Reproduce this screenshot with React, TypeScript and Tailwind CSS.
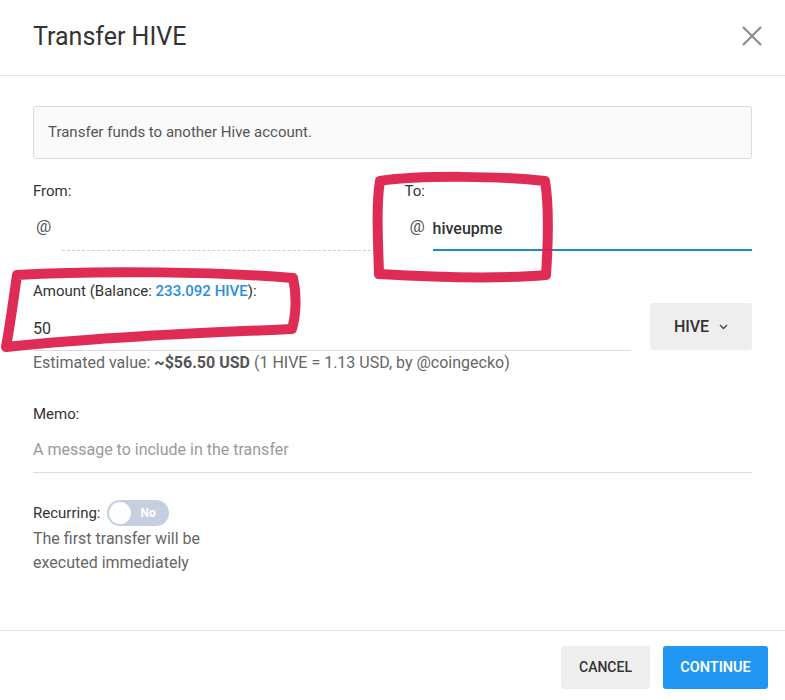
import React from "react";

function Annotations() {
    // hand drawn red marks over the screenshot
    return (
        <svg className="absolute inset-0 pointer-events-none" width="785" height="700" viewBox="0 0 785 700" fill="none">
            <path
                d="M380 181 C 420 175, 500 176, 545 181 C 549 205, 548 245, 546 275 C 500 279, 430 277, 379 274 C 378 240, 376 205, 380 181 Z"
                stroke="#dc1a45" strokeWidth="10" strokeLinejoin="round" strokeLinecap="round" opacity="0.92"
            />
            <path
                d="M17 275 C 100 270, 220 272, 293 278 C 297 295, 296 315, 292 329 C 200 333, 100 337, 6 347 C 11 320, 14 295, 17 275 Z"
                stroke="#dc1a45" strokeWidth="10" strokeLinejoin="round" strokeLinecap="round" opacity="0.92"
            />
        </svg>
    );
}

export default function App() {
    return (
        <div className="relative w-[785px] h-[700px] bg-white flex flex-col font-['Roboto','Liberation_Sans',sans-serif] text-[#333]">
            <div className="h-[76px] shrink-0 flex items-center justify-between pl-[33px] pr-[22px] border-b border-[#e6e6e6]">
                <span className="text-[25px] text-[#333] mt-[-2px]">Transfer HIVE</span>
                <svg width="22" height="22" viewBox="0 0 22 22" className="mt-[-4px]">
                    <path d="M2 2 L20 20 M20 2 L2 20" stroke="#8a8a8a" strokeWidth="2" />
                </svg>
            </div>

            <div className="flex-1 px-[33px] pt-[30px]">
                <div className="h-[53px] flex items-center px-[14px] border border-[#dcdcdc] bg-[#fafafa] rounded-[3px] text-[15px] text-[#555]">
                    Transfer funds to another Hive account.
                </div>

                <div className="grid grid-cols-2 gap-6 mt-[22px]">
                    <div>
                        <div className="text-[15px] leading-5 text-[#333]">From:</div>
                        <div className="flex items-end h-[50px]">
                            <span className="w-[29px] pl-[3px] pb-[12px] text-[17px] text-[#555]">@</span>
                            <div className="flex-1 h-[40px] border-b border-dashed border-[#cfcfcf]"></div>
                        </div>
                    </div>
                    <div>
                        <div className="text-[15px] leading-5 text-[#333]">To:</div>
                        <div className="flex items-end h-[50px]">
                            <span className="w-[28px] pl-[5px] pb-[12px] text-[17px] text-[#555]">@</span>
                            <div className="flex-1 h-[40px] border-b-2 border-[#1d8bc9] flex items-center pb-[3px] text-[16px] font-medium text-[#333]">
                                hiveupme
                            </div>
                        </div>
                    </div>
                </div>

                <div className="mt-[30px] text-[15px] leading-5 text-[#333]">
                    Amount (Balance: <span className="text-[#2a8ee0] font-medium">233.092 HIVE</span>):
                </div>
                <div className="flex items-end gap-[19px] mt-[2px]">
                    <div className="flex-1 h-[48px] border-b border-[#dcdcdc] flex items-center pt-[4px] text-[16px] text-[#333]">50</div>
                    <div className="w-[102px] h-[47px] mb-[1px] bg-[#eeeeee] rounded-[3px] flex items-center justify-center gap-[10px] text-[16px] font-medium text-[#333]">
                        HIVE
                        <svg width="9" height="6" viewBox="0 0 9 6">
                            <path d="M1 1 L4.5 4.5 L8 1" stroke="#444" strokeWidth="1.4" fill="none" />
                        </svg>
                    </div>
                </div>
                <div className="text-[16px] leading-6 text-[#666]">
                    Estimated value: <span className="font-bold text-[#555]">~$56.50 USD</span> (1 HIVE = 1.13 USD, by @coingecko)
                </div>

                <div className="mt-[29px] text-[15px] leading-5 text-[#333]">Memo:</div>
                <div className="h-[49px] border-b border-[#dcdcdc] flex items-center pt-[4px] text-[16px] text-[#9a9a9a]">
                    A message to include in the transfer
                </div>

                <div className="mt-[27px] flex items-center gap-[7px]">
                    <span className="text-[15px] text-[#333]">Recurring:</span>
                    <div className="w-[62px] h-[26px] rounded-full bg-[#c5cfdf] flex items-center px-[2px]">
                        <div className="w-[22px] h-[22px] rounded-full bg-white"></div>
                        <span className="ml-[9px] text-[12px] font-bold text-white">No</span>
                    </div>
                </div>
                <div className="text-[16px] leading-6 text-[#666] mt-[1px]">
                    The first transfer will be
                    <br />
                    executed immediately
                </div>
            </div>

            <div className="h-[70px] shrink-0 border-t border-[#e6e6e6] flex items-start justify-end gap-[13px] pr-[17px] pt-[15px]">
                <button className="w-[89px] h-[43px] rounded-[3px] bg-[#eeeeee] text-[14px] font-medium text-[#333]">CANCEL</button>
                <button className="w-[105px] h-[43px] rounded-[3px] bg-[#2196f3] text-[14.5px] font-semibold text-white">CONTINUE</button>
            </div>

            <Annotations />
        </div>
    );
}
